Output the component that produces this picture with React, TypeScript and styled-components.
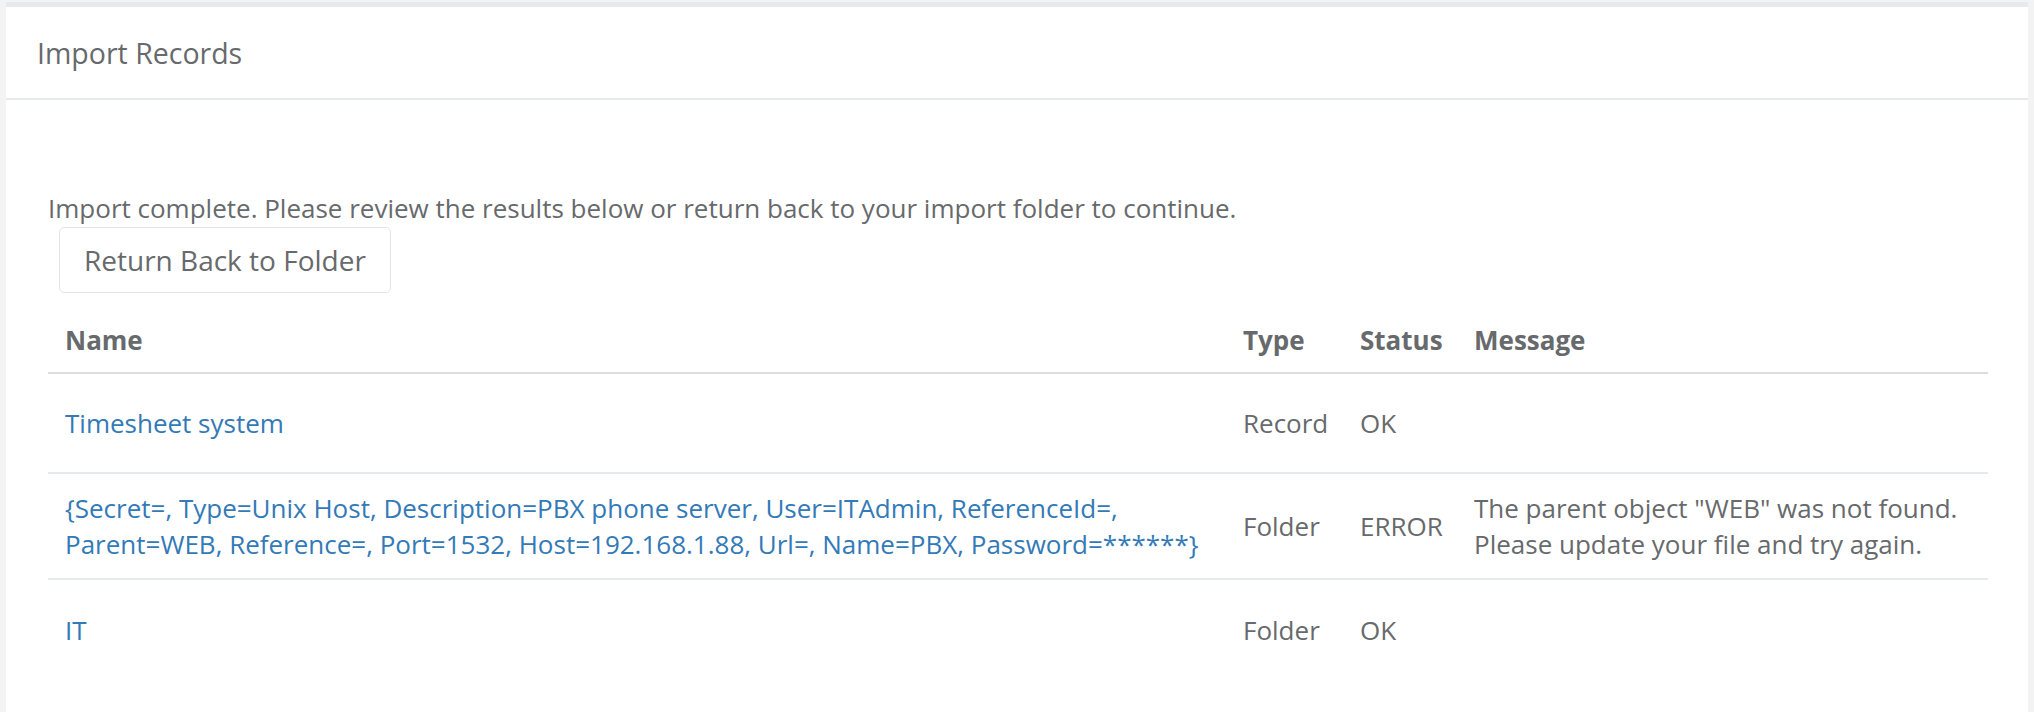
import styled, { createGlobalStyle } from "styled-components";

const GlobalStyle = createGlobalStyle`
  body {
    margin: 0;
    background: #f3f3f4;
    font-family: "Open Sans", "Liberation Sans", sans-serif;
    color: #676a6c;
  }
`;

interface ImportRow {
  id: number;
  name: string;
  type: string;
  status: string;
  message?: string;
}

const rows: Array<ImportRow> = [
  { id: 1, name: "Timesheet system", type: "Record", status: "OK" },
  {
    id: 2,
    name: "{Secret=, Type=Unix Host, Description=PBX phone server, User=ITAdmin, ReferenceId=, Parent=WEB, Reference=, Port=1532, Host=192.168.1.88, Url=, Name=PBX, Password=******}",
    type: "Folder",
    status: "ERROR",
    message: 'The parent object "WEB" was not found. Please update your file and try again.',
  },
  { id: 3, name: "IT", type: "Folder", status: "OK" },
];

const headerItems = [
  { label: "Name", width: undefined },
  { label: "Type", width: 117 },
  { label: "Status", width: 114 },
  { label: "Message", width: 531 },
];

export default function App() {
  return (
    <Page>
      <GlobalStyle />
      <Box>
        <BoxTitle>
          <Title>Import Records</Title>
        </BoxTitle>
        <BoxContent>
          <Intro>
            Import complete. Please review the results below or return back to your import folder to continue.
          </Intro>
          <ReturnButton type="button">Return Back to Folder</ReturnButton>
          <Table>
            <thead>
              <tr>
                {headerItems.map((header) => (
                  <TableHeader key={header.label} $width={header.width}>
                    {header.label}
                  </TableHeader>
                ))}
              </tr>
            </thead>
            <tbody>
              {rows.map((item) => (
                <Row key={item.id}>
                  <TableData>
                    <NameLink href="#">{item.name}</NameLink>
                  </TableData>
                  <TableData>{item.type}</TableData>
                  <TableData>{item.status}</TableData>
                  <TableData>{item.message}</TableData>
                </Row>
              ))}
            </tbody>
          </Table>
        </BoxContent>
      </Box>
    </Page>
  );
}

const Page = styled.div`
  padding: 2px 6px 0 6px;
`;

const Box = styled.div`
  background: #ffffff;
  border-top: 5px solid #e7eaec;
`;

const BoxTitle = styled.div`
  height: 91px;
  display: flex;
  align-items: center;
  padding: 0 31px;
  border-bottom: 2px solid #e7eaec;
`;

const Title = styled.h5`
  margin: 0;
  font-size: 28.5px;
  font-weight: 400;
  color: #676a6c;
`;

const BoxContent = styled.div`
  padding: 90px 40px 40px 42px;
`;

const Intro = styled.p`
  margin: 0;
  font-size: 26px;
  line-height: 36px;
`;

const ReturnButton = styled.button`
  margin: 1px 0 0 11px;
  height: 66px;
  padding: 0 24px;
  font-family: inherit;
  font-size: 28px;
  color: #676a6c;
  background: #ffffff;
  border: 1px solid #e2e5e8;
  border-radius: 5px;
`;

const Table = styled.table`
  margin-top: 15px;
  width: 100%;
  border-collapse: collapse;
  table-layout: fixed;
  font-size: 26px;
  line-height: 36px;
`;

const TableHeader = styled.th<{ $width?: number }>`
  box-sizing: border-box;
  width: ${(p) => (p.$width ? `${p.$width}px` : "auto")};
  padding: 14px 17px 14px;
  text-align: left;
  font-weight: 700;
  color: #676a6c;
  border-bottom: 2px solid #dddddd;
`;

const Row = styled.tr`
  height: 100px;
`;

const TableData = styled.td`
  padding: 16px 17px;
  vertical-align: middle;
  border-top: 2px solid #e7eaec;
  tr:first-child > & {
    border-top: none;
  }
`;

const NameLink = styled.a`
  color: #337ab7;
  text-decoration: none;
`;
